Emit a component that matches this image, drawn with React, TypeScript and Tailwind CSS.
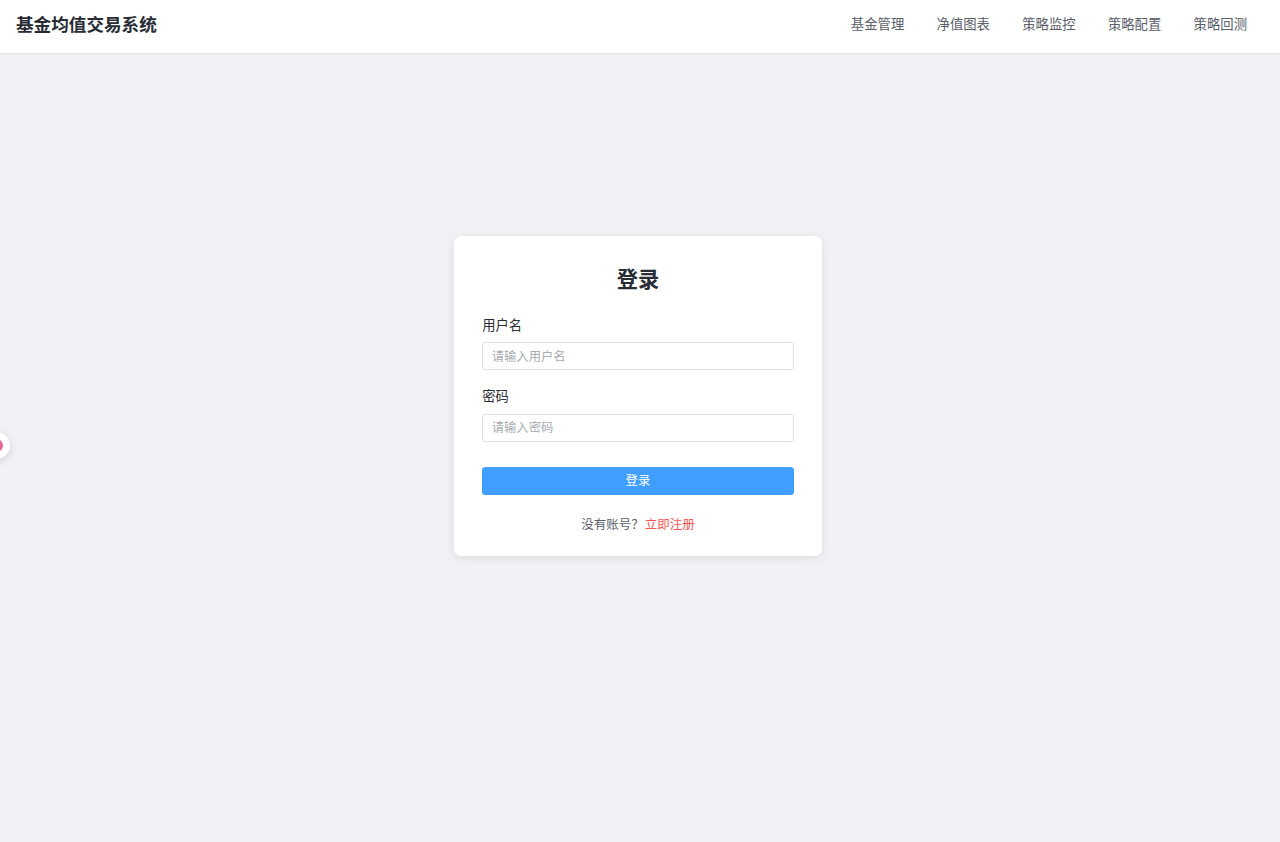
const navItems = ['基金管理', '净值图表', '策略监控', '策略配置', '策略回测']

const fields = [
  { id: 'username', label: '用户名', type: 'text', placeholder: '请输入用户名' },
  { id: 'password', label: '密码', type: 'password', placeholder: '请输入密码' }
]

export default function App() {
  return (
    <div className="relative flex h-screen flex-col overflow-hidden bg-[#f0f2f5] font-['Noto_Sans_CJK_SC',sans-serif] text-[#282c34]">
      {/* Header */}
      <header className="z-10 flex h-[53px] shrink-0 items-center justify-between bg-white pl-4 pr-[33px] pb-1.5 shadow-[0_1px_2px_rgba(0,0,0,0.08)]">
        <h1 className="text-[17.6px] leading-6 font-bold">基金均值交易系统</h1>
        <nav className="flex gap-[32.3px]">
          {navItems.map((item) => (
            <a key={item} href="#" className="text-[13.35px] leading-5 text-[#5a5e6b]">
              {item}
            </a>
          ))}
        </nav>
      </header>

      {/* Login card */}
      <main className="flex flex-1 items-start justify-center pt-[183px] pr-[4px]">
        <div className="h-[320px] w-[367.5px] rounded-[7px] bg-white px-7 pt-[26px] shadow-[0_2px_11px_rgba(0,0,0,0.09)]">
          <h2 className="mb-[22px] text-center text-[21.3px] leading-[31px] font-bold">登录</h2>
          <form>
            {fields.map((field) => (
              <div key={field.id} className="mb-[16.2px]">
                <label htmlFor={field.id} className="mb-[7.2px] block text-[13.3px] leading-5">
                  {field.label}
                </label>
                <input
                  id={field.id}
                  type={field.type}
                  placeholder={field.placeholder}
                  className="block h-7 w-full rounded-[3.5px] border border-[#dcdfe6] px-[8.5px] pb-px text-[12.3px] outline-none placeholder:text-[#a8abb2]"
                />
              </div>
            ))}
            <button
              type="button"
              className="mt-[25px] block h-7 w-full rounded-[3.5px] bg-[#409eff] pb-[2px] text-[12.4px] leading-[26px] text-white"
            >
              登录
            </button>
          </form>
          <p className="mt-[19px] text-center text-[12.5px] leading-5 text-[#5a5e6b]">
            没有账号？<a href="#" className="ml-px text-[#f25555]">立即注册</a>
          </p>
        </div>
      </main>

      {/* Floating handle on the left edge */}
      <div className="absolute top-[432px] -left-[17px] flex size-[27px] items-center justify-center rounded-full bg-white shadow-[0_2px_8px_rgba(0,0,0,0.14)]">
        <span className="size-[13px] rounded-full bg-[#ec6494]" />
      </div>
    </div>
  )
}
